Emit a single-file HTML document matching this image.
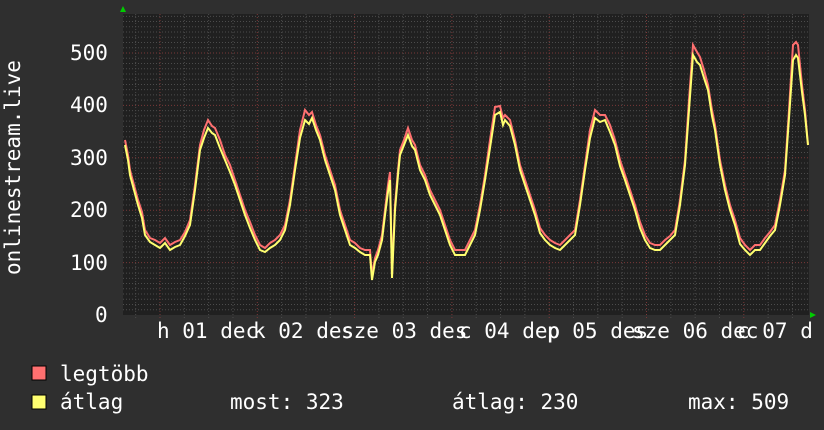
<!DOCTYPE html>
<html><head><meta charset="utf-8"><style>
body{margin:0;width:824px;height:430px;background:#2f2f2f;overflow:hidden;font-family:"DejaVu Sans Mono","Liberation Mono",monospace;color:#fff;font-size:21px}
.t{position:absolute;white-space:pre;line-height:1}
</style></head><body>
<svg width="824" height="430" style="position:absolute;left:0;top:0">
<rect x="123" y="14" width="686" height="301" fill="#202020"/>
<g id="grid"></g>
<polygon points="123,6 120,12 126,12" fill="#0c0"/>
<polygon points="816,315 810,312 810,318" fill="#0c0"/>
<polyline fill="none" stroke="#ff7070" stroke-width="2" points="125,140 128,155 130,170 134,185 138,200 142,212 145,230 150,238 155,240 160,243 165,238 170,245 175,242 180,240 185,232 190,220 195,185 200,145 204,130 208,120 212,126 215,128 220,140 225,155 230,165 235,180 240,195 245,210 250,222 255,235 260,245 265,248 270,243 275,240 280,235 285,225 290,200 295,165 300,130 305,110 309,115 312,112 316,125 320,135 325,155 330,170 335,185 340,210 345,225 350,240 355,243 360,248 365,250 370,250 372,275 375,258 378,250 382,235 385,210 388,185 390,172 392,275 395,205 398,170 400,150 404,140 408,128 412,140 415,145 420,165 425,175 430,190 435,200 440,210 445,225 450,240 455,250 460,250 465,250 470,240 475,230 480,205 485,175 490,140 495,107 500,106 503,118 505,115 510,120 515,140 520,165 525,180 530,195 535,210 540,228 545,235 550,240 555,243 560,245 565,240 570,235 575,230 580,200 585,165 590,130 595,110 600,115 605,115 610,125 615,140 620,160 625,175 630,190 635,205 640,222 645,235 650,243 655,245 660,245 665,240 670,236 675,230 680,200 685,160 689,100 693,45 697,52 700,57 704,70 708,85 712,110 715,125 720,160 725,185 730,205 735,220 740,238 745,245 750,250 755,245 760,245 765,238 770,232 775,225 780,200 785,170 789,110 793,45 796,42 798,45 802,85 805,110 808,145"/>
<polyline fill="none" stroke="#ffff70" stroke-width="2" points="125,145 128,160 130,175 134,190 138,205 142,218 145,235 150,242 155,245 160,248 165,243 170,250 175,247 180,245 185,236 190,225 195,190 200,150 204,138 208,128 212,133 215,135 220,148 225,160 230,172 235,185 240,200 245,215 250,228 255,240 260,250 265,252 270,248 275,245 280,240 285,230 290,205 295,170 300,138 305,120 309,124 312,118 316,130 320,140 325,160 330,175 335,190 340,215 345,230 350,245 355,248 360,252 365,255 370,255 372,280 375,262 378,255 382,240 385,215 388,192 390,180 392,278 395,210 398,175 400,155 404,145 408,135 412,146 415,150 420,170 425,180 430,195 435,205 440,215 445,230 450,245 455,255 460,255 465,255 470,245 475,235 480,210 485,180 490,148 495,115 500,112 503,125 505,120 510,126 515,145 520,170 525,185 530,200 535,215 540,233 545,240 550,245 555,248 560,250 565,245 570,240 575,235 580,205 585,170 590,138 595,118 600,122 605,120 610,132 615,145 620,166 625,180 630,195 635,210 640,228 645,240 650,248 655,250 660,250 665,245 670,240 675,235 680,205 685,165 689,110 693,55 697,62 700,65 704,78 708,90 712,116 715,130 720,165 725,190 730,210 735,225 740,244 745,250 750,255 755,250 760,250 765,243 770,236 775,230 780,205 785,175 789,118 793,60 796,55 798,58 802,92 805,115 808,145"/>
<rect x="32" y="366" width="14" height="14" fill="#ff7070" stroke="#000" stroke-width="1"/>
<rect x="32" y="395" width="14" height="14" fill="#ffff70" stroke="#000" stroke-width="1"/>
</svg>
<script>
(function(){var g=document.getElementById('grid'),s='';
for(var v=10;v<=570;v+=10){var y=315-v*0.524;if(y<14)break;var maj=v%100==0;s+='<line x1="123" x2="809" y1="'+y+'" y2="'+y+'" stroke="'+(maj?'#7a3838':'#4c4c4c')+'" stroke-dasharray="1 2"/>';}
for(var x=160-97.3*0.25;x<809;x+=97.3/4){var d=Math.abs(((x-160)/97.3)-Math.round((x-160)/97.3))<0.01;if(x<124)continue;s+='<line y1="14" y2="318" x1="'+x+'" x2="'+x+'" stroke="'+(d?'#7a3838':'#4c4c4c')+'" stroke-dasharray="1 2"/>';}
g.innerHTML=s;})();
</script>
<div class="t" style="left:70px;top:43px">500</div>
<div class="t" style="left:70px;top:95px">400</div>
<div class="t" style="left:70px;top:148px">300</div>
<div class="t" style="left:70px;top:200px">200</div>
<div class="t" style="left:70px;top:253px">100</div>
<div class="t" style="left:95px;top:305px">0</div>
<div class="t" style="transform:rotate(-90deg);transform-origin:0 0;left:3px;top:275px">onlinestream.live</div>
<div class="t" style="left:157px;top:321px">h 01 dec</div>
<div class="t" style="left:253px;top:321px">k 02 des</div>
<div class="t" style="left:341px;top:321px">sze 03 des</div>
<div class="t" style="left:459px;top:321px">c 04 dep</div>
<div class="t" style="left:547px;top:321px">p 05 des</div>
<div class="t" style="left:632px;top:321px">sze 06 dec</div>
<div class="t" style="left:737px;top:321px">c 07 d</div>
<div class="t" style="left:60px;top:364px">legtöbb</div>
<div class="t" style="left:60px;top:392px">átlag</div>
<div class="t" style="left:230px;top:392px">most: 323</div>
<div class="t" style="left:452px;top:392px">átlag: 230</div>
<div class="t" style="left:688px;top:392px">max: 509</div>
</body></html>
